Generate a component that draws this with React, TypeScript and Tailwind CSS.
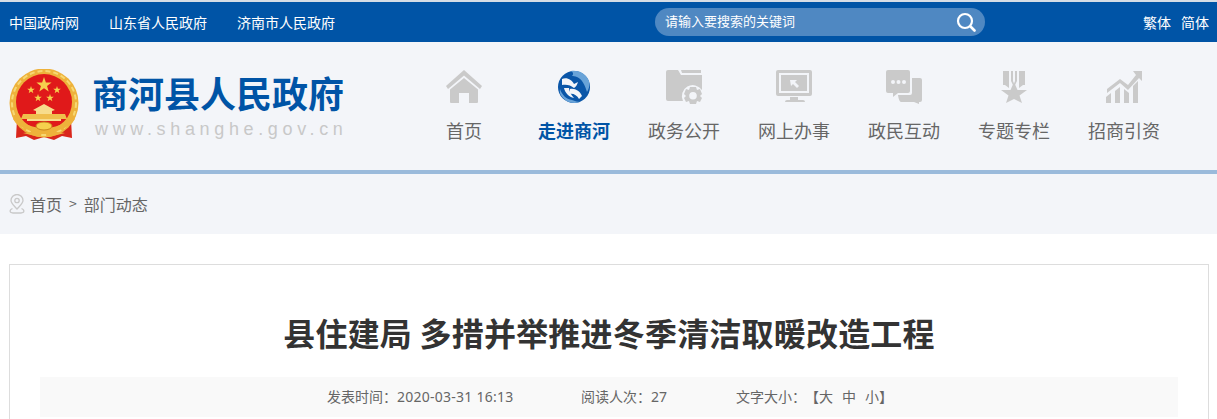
const FONT = '"Noto Sans CJK SC", "Liberation Sans", sans-serif'

const ICON_GRAY = '#cacaca'

// ── Nav icons ─────────────────────────────────────────────
function HomeIcon() {
  return (
    <svg viewBox="0 0 38 34" width="38" height="34" fill={ICON_GRAY}>
      <path d="M19 0 L37 16 L35 19 L19 5.5 L3 19 L1 16 Z" />
      <path d="M5 19.5 L19 8 L33 19.5 V32 Q33 33 32 33 H24 V23 H14 V33 H6 Q5 33 5 32 Z" />
    </svg>
  )
}

function GlobeIcon() {
  return (
    <svg viewBox="0 0 34 34" width="34" height="34">
      <circle cx="17" cy="17" r="16" fill="#0a56a8" />
      <path d="M14 1 C21 0 29 3 32 11 C33 15 32 19 30 22 C28 15 25 9 20 7 C18 6 16 6 15 6 C17 4 16 2 14 1 Z" fill="#69a3d8" />
      <path d="M5 9 C10 7 15 10 17 14 L21 12 C20 15 19 17 17 18 C14 15 9 14 5 15 Z" fill="#f3f5f9" />
      <path d="M13 19 C18 18 23 21 25 26 L22 29 C20 25 16 23 12 24 Z" fill="#f3f5f9" />
      <path d="M3 19 C5 25 9 29 15 30 C18 31 21 32 23 32 C18 34 11 33 7 29 C4 26 2 23 3 19 Z" fill="#69a3d8" />
      <path d="M7 18 C8 23 12 27 17 28 C14 25 12 21 12 18 Z" fill="#f3f5f9" />
    </svg>
  )
}

function FolderGearIcon() {
  return (
    <svg viewBox="0 0 36 34" width="36" height="34" fill={ICON_GRAY}>
      <path d="M15 0 H35 V3 H16 Z" />
      <path d="M0 2 Q0 0 2 0 H12 L15 5 H36 V20 A11 11 0 0 0 17 31 H2 Q0 31 0 29 Z" />
      <path
        fillRule="evenodd"
        d="M24 17 H30 L31 20 L34 19 L36 24 L34 26 L36 28 L34 32 L31 31 L30 34 H24 L23 31 L20 32 L18 28 L20 26 L18 24 L20 19 L23 20 Z M27 22 A3.8 3.8 0 1 0 27 29.6 A3.8 3.8 0 1 0 27 22 Z"
      />
    </svg>
  )
}

function MonitorIcon() {
  return (
    <svg viewBox="0 0 36 34" width="36" height="34" fill={ICON_GRAY}>
      <path
        fillRule="evenodd"
        d="M2 0 H34 Q36 0 36 2 V24 Q36 26 34 26 H2 Q0 26 0 24 V2 Q0 0 2 0 Z M3 3 V23 H33 V3 Z"
      />
      <path d="M5 5 H31 V21 H5 Z" />
      <path d="M14 27 H22 V30 H27 Q29 30 29 32 H9 Q9 30 11 30 H14 Z" />
      <path d="M14 10 L21 10 L19 12 L23 16 L21 18 L17 14 L15 16 Z" fill="#f3f5f9" />
    </svg>
  )
}

function ChatIcon() {
  return (
    <svg viewBox="0 0 36 34" width="36" height="34" fill={ICON_GRAY}>
      <path
        fillRule="evenodd"
        d="M2 0 H22 Q24 0 24 2 V21 Q24 23 22 23 H12 L7 27 V23 H2 Q0 23 0 21 V2 Q0 0 2 0 Z M7 10 A2 2 0 1 0 7 14 A2 2 0 1 0 7 10 Z M12.500 10 A2 2 0 1 0 12.500 14 A2 2 0 1 0 12.500 10 Z M18 10 A2 2 0 1 0 18 14 A2 2 0 1 0 18 10 Z"
      />
      <path d="M26 8 H34 Q36 8 36 10 V30 Q36 32 34 32 H33 V34 L28 32 H15 Q13 32 12 25 H24 Q26 25 26 23 Z" />
    </svg>
  )
}

function MedalIcon() {
  return (
    <svg viewBox="0 0 26 32" width="26" height="32" fill={ICON_GRAY}>
      <path d="M2 0 H8 V17 L4 14 H2 Z" />
      <path d="M10 0 H12 V10 L13 13 L14 10 V0 H16 V10 L13 16 L10 10 Z" />
      <path d="M18 0 H24 V14 H22 L18 17 Z" />
      <path d="M13 11 L16.500 19 H26 L18.500 24.500 L21 32 L13 28 L5 32 L7.500 24.500 L0 19 H9.500 Z" />
    </svg>
  )
}

function ChartIcon() {
  return (
    <svg viewBox="0 0 36 32" width="36" height="32" fill={ICON_GRAY}>
      <path d="M27 0 H36 V10 L33 7 L22 19 L14 12 L1 22 V18 L14 8 L22 14 L30 4 Z" />
      <path d="M0 26 L5 22 V32 H0 Z" />
      <path d="M9 20 L14 16 V32 H9 Z" />
      <path d="M18 18 L23 22 V32 H18 Z" />
      <path d="M27 15 L32 10 V32 H27 Z" />
    </svg>
  )
}

// ── National emblem, simplified ───────────────────────────
function Star({ cx, cy, r }: { cx: number; cy: number; r: number }) {
  const pts = Array.from({ length: 10 }, (_, i) => {
    const rad = i % 2 === 0 ? r : r * 0.4
    const a = (Math.PI / 5) * i - Math.PI / 2
    return `${(cx + rad * Math.cos(a)).toFixed(2)},${(cy + rad * Math.sin(a)).toFixed(2)}`
  }).join(' ')
  return <polygon points={pts} fill="#f6d04d" />
}

function Emblem() {
  return (
    <svg viewBox="0 0 70 72" width="70" height="72">
      <path d="M8 50 L7 69 L17 67 L25 71 L35 68 L45 71 L53 67 L63 69 L62 50 Z" fill="#d9261c" />
      <circle cx="35" cy="34" r="34.500" fill="#eeb23b" />
      <circle cx="35" cy="34" r="32" fill="none" stroke="#f7d873" strokeWidth="2" strokeDasharray="5 3" />
      <circle cx="35" cy="33" r="28" fill="#e0191a" />
      <Star cx={35} cy={16} r={8} />
      <Star cx={22} cy={21} r={4} />
      <Star cx={48} cy={21} r={4} />
      <Star cx={29} cy={29} r={4} />
      <Star cx={41} cy={29} r={4} />
      <path d="M24 41 L35 35 L46 41 L43 42 V45 H27 V42 Z" fill="#f7dc8b" />
      <path d="M14 45 H56 L58 50 H12 Z" fill="#efbe4c" />
      <path d="M18 50 H52 V52 H18 Z" fill="#f7dc8b" />
      <path d="M7 44 C12 55 24 59 35 59 C46 59 58 55 63 44 L66 50 C60 60 46 63 35 63 C24 63 10 60 4 50 Z" fill="#eeb23b" />
      <ellipse cx="35" cy="57" rx="8" ry="4" fill="#f6d04d" stroke="#c8861c" strokeWidth="1" />
      <path d="M14 64 L30 62 V68 Z M56 64 L40 62 V68 Z" fill="#eeb23b" />
    </svg>
  )
}

function PinIcon() {
  return (
    <svg viewBox="0 0 16 20" width="16" height="20" fill="none" stroke="#c9c9c9" strokeWidth="1.300">
      <path d="M8 15 C5 11.500 2 9.500 2 6.500 A6 6 0 0 1 14 6.500 C14 9.500 11 11.500 8 15 Z" />
      <circle cx="8" cy="6.500" r="2.200" />
      <path d="M3.500 14.500 C0 16 0.500 18.800 4 19 H12 C15.500 18.800 16 16 12.500 14.500" />
    </svg>
  )
}

function SearchIcon() {
  return (
    <svg viewBox="0 0 20 20" width="20" height="20" fill="none" stroke="#ffffff">
      <circle cx="9" cy="9" r="7" strokeWidth="2.200" />
      <path d="M14.500 14.500 L18.500 18.500" strokeWidth="2.600" strokeLinecap="round" />
    </svg>
  )
}

const NAV = [
  { label: '首页', icon: <HomeIcon /> },
  { label: '走进商河', icon: <GlobeIcon />, active: true },
  { label: '政务公开', icon: <FolderGearIcon /> },
  { label: '网上办事', icon: <MonitorIcon /> },
  { label: '政民互动', icon: <ChatIcon /> },
  { label: '专题专栏', icon: <MedalIcon /> },
  { label: '招商引资', icon: <ChartIcon /> },
]

export default function App() {
  return (
    <div className="h-[419px] overflow-hidden bg-white" style={{ fontFamily: FONT }}>
      {/* Top bar */}
      <div className="h-[42px] border-t-2 border-[#d5dde6] bg-[#0054a6] flex items-center text-white text-[14px]">
        <div className="flex gap-[30px] pl-[9px] w-[655px]">
          <a>中国政府网</a>
          <a>山东省人民政府</a>
          <a>济南市人民政府</a>
        </div>
        <div className="w-[330px] h-[28px] rounded-full bg-[#4f88c2] flex items-center justify-between pl-[10px] pr-[9px] text-[13px]">
          <span className="-mt-[2px]">请输入要搜索的关键词</span>
          <SearchIcon />
        </div>
        <div className="ml-auto flex gap-[10px] pr-[8px]">
          <a>繁体</a>
          <a>简体</a>
        </div>
      </div>

      {/* Header */}
      <div className="h-[132px] bg-[#f3f5f9] border-b-4 border-[#9abadb] flex">
        <div className="w-[409px] flex pl-[9px] pt-[27px]">
          <Emblem />
          <div className="ml-[13px] -mt-[1px]">
            <div className="text-[36px] leading-[48px] font-bold text-[#0054a6] whitespace-nowrap">商河县人民政府</div>
            <div className="mt-[1px] text-[18px] leading-[24px] tracking-[4.650px] text-[#c8c8c8] pl-[3px] whitespace-nowrap" style={{ fontFamily: '"Liberation Sans", sans-serif' }}>
              www.shanghe.gov.cn
            </div>
          </div>
        </div>
        <div className="flex">
          {NAV.map(item => (
            <div key={item.label} className="w-[110px] flex flex-col items-center pt-[28px]">
              <div className="h-[34px] flex items-center justify-center">{item.icon}</div>
              <div className={`mt-[12px] text-[18px] leading-[28px] whitespace-nowrap ${item.active ? 'font-bold text-[#0054a6]' : 'text-[#666666]'}`}>
                {item.label}
              </div>
            </div>
          ))}
        </div>
      </div>

      {/* Breadcrumb */}
      <div className="h-[60px] bg-[#f3f5f9] flex items-center pl-[9px] text-[#666666]">
        <PinIcon />
        <span className="ml-[5px] -mt-[1px] text-[16px]">首页</span>
        <span className="mx-[7px] -mt-[1px] text-[14px]">&gt;</span>
        <span className="-mt-[1px] text-[16px]">部门动态</span>
      </div>

      {/* Article card */}
      <div className="mt-[30px] ml-[9px] mr-[8px] h-[300px] border border-[#dddddd] px-[30px]">
        <h1 className="pt-[43px] text-[32px] leading-[48px] font-bold tracking-[0.200px] text-[#333333] text-center">
          县住建局 多措并举推进冬季清洁取暖改造工程
        </h1>
        <div className="mt-[21px] h-[40px] pb-[2px] bg-[#f9f9f9] flex items-center pl-[287px] text-[14px] text-[#666666]">
          <span className="w-[254px] whitespace-nowrap">
            发表时间：<span className="tracking-[0.250px]" style={{ fontFamily: '"Noto Sans", sans-serif' }}>2020-03-31 16:13</span>
          </span>
          <span className="w-[155px] whitespace-nowrap">
            阅读人次：<span style={{ fontFamily: '"Noto Sans", sans-serif' }}>27</span>
          </span>
          <span className="whitespace-nowrap">
            文字大小：<span className="ml-[6px]">【大</span><span className="ml-[9px]">中</span><span className="ml-[9px]">小</span>】
          </span>
        </div>
      </div>
    </div>
  )
}
